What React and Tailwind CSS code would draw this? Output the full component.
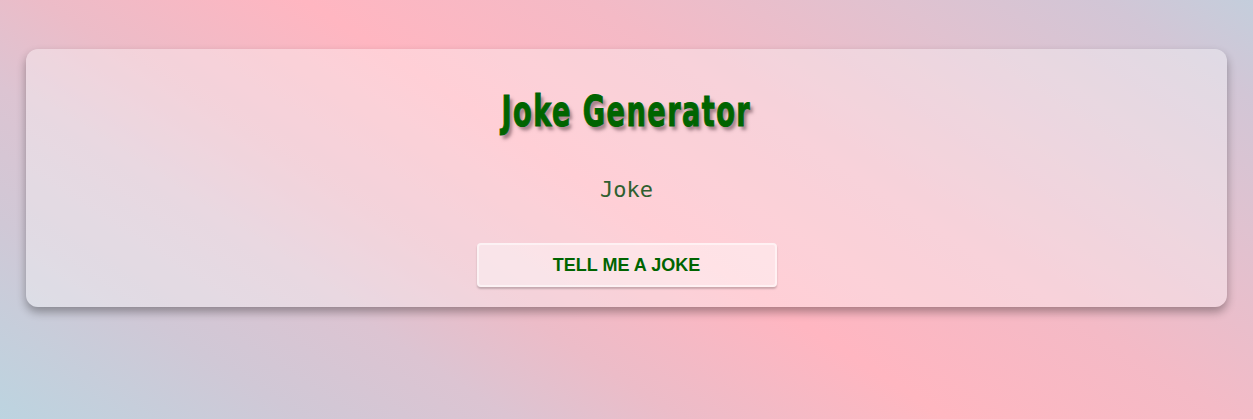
export default function App() {
  return (
    <div className="w-[1253px] h-[419px] overflow-hidden pt-[49px] px-[26px] bg-[linear-gradient(33deg,#bcd4e0_0%,#d0c8d6_16%,#dcc4d2_27%,#ecbcc8_36%,#ffb6c1_50%,#f4bac6_65%,#e0c2d0_81%,#d2c6d6_92%,#c4cedc_100%)]">
      <div className="h-[258px] rounded-[12px] bg-white/35 shadow-[0_5px_10px_rgba(0,0,0,0.33)] flex flex-col items-center pt-[39px]">
        <h1 className="h-[48px] leading-[48px] text-[42px] font-bold text-[#006400] tracking-[2px] font-['DejaVu_Sans',sans-serif] [font-stretch:condensed] scale-x-[0.72] [-webkit-text-stroke:1px_#006400] [text-shadow:4px_4px_4px_rgba(90,60,70,0.55)]">
          Joke Generator
        </h1>
        <p className="mt-[39px] h-[30px] leading-[30px] text-[22px] text-[#2f5f2f] font-['DejaVu_Sans_Mono',monospace]">
          Joke
        </p>
        <button className="mt-[38px] w-[300px] h-[44px] rounded-[4px] bg-white/40 border-2 border-white/50 shadow-[0_2px_2px_rgba(0,0,0,0.2)] text-[18px] font-bold text-[#006400] font-['Liberation_Sans',Arial,sans-serif]">
          TELL ME A JOKE
        </button>
      </div>
    </div>
  );
}
